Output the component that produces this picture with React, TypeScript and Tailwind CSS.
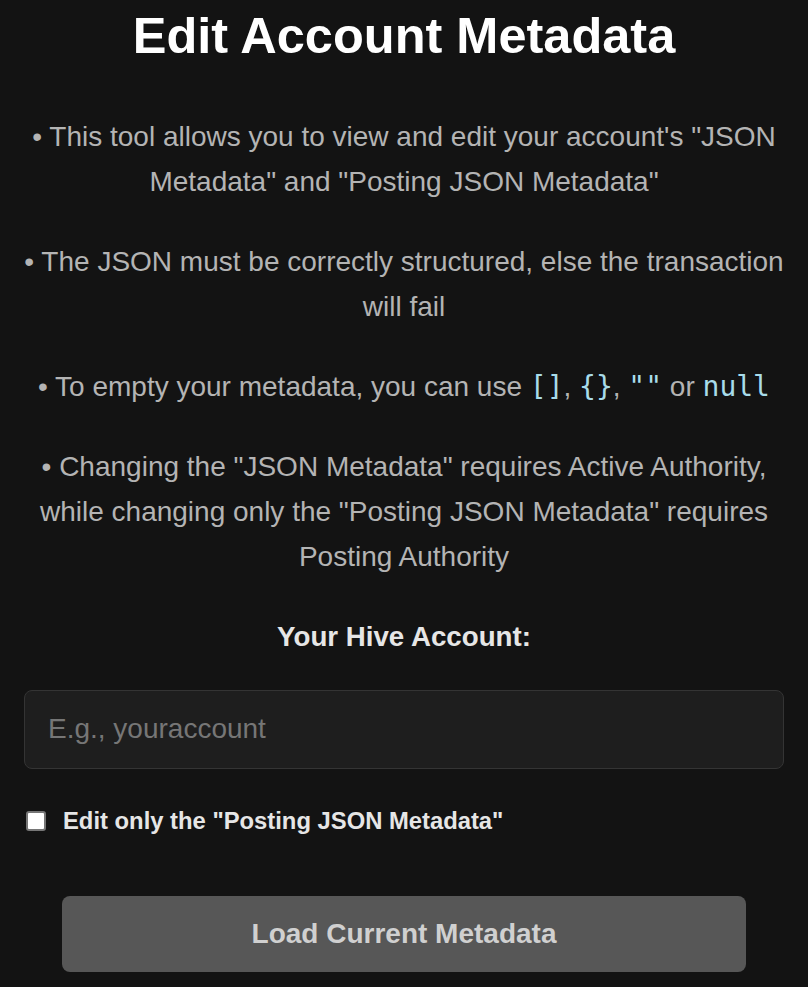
import React, { useState } from "react";

const Code = ({ children }: { children: React.ReactNode }) => (
  <code className="font-['DejaVu_Sans_Mono',monospace] text-[28px] text-[#a8dcea]">
    {children}
  </code>
);

const Note = ({ children }: { children: React.ReactNode }) => (
  <p className="mt-[35.3px] text-center text-[28px] leading-[44.8px] text-[#b4b4b4]">
    {children}
  </p>
);

const App = () => {
  const [account, setAccount] = useState("");
  const [postingOnly, setPostingOnly] = useState(false);

  return (
    <div className="min-h-[987px] bg-[#131313] font-['Liberation_Sans',Arial,sans-serif]">
      <div className="flex flex-col px-[24px] pt-[6px]">
        {/* Title */}
        <h1 className="text-center text-[50.5px] font-bold leading-[60px] text-white">
          Edit Account Metadata
        </h1>

        {/* Notes */}
        <div className="mt-[14px]">
          <Note>
            • This tool allows you to view and edit your account's "JSON
            Metadata" and "Posting JSON Metadata"
          </Note>
          <Note>
            • The JSON must be correctly structured, else the transaction will
            fail
          </Note>
          <Note>
            • To empty your metadata, you can use <Code>[]</Code>,{" "}
            <Code>{"{}"}</Code>, <Code>""</Code> or <Code>null</Code>
          </Note>
          <Note>
            • Changing the "JSON Metadata" requires Active Authority, while
            changing only the "Posting JSON Metadata" requires Posting Authority
          </Note>
        </div>

        {/* Account field */}
        <label
          htmlFor="account"
          className="mt-[40px] text-center text-[27.7px] font-bold leading-[33px] text-[#e6e6e6]"
        >
          Your Hive Account:
        </label>
        <input
          id="account"
          value={account}
          onChange={(e) => setAccount(e.target.value)}
          placeholder="E.g., youraccount"
          className="mt-[37px] h-[79px] w-full rounded-[8px] border border-[#343434] bg-[#1e1e1e] px-[23px] text-[28px] text-[#e6e6e6] outline-none placeholder:text-[#767676]"
        />

        {/* Posting only */}
        <label className="mt-[37px] flex items-center gap-[17px]">
          <input
            type="checkbox"
            checked={postingOnly}
            onChange={(e) => setPostingOnly(e.target.checked)}
            className="ml-[2px] h-[20px] w-[20px] appearance-none rounded-[3px] border-2 border-[#767676] bg-white checked:bg-[#0a66d8]"
          />
          <span className="text-[23.8px] font-bold leading-[30px] text-[#e6e6e6]">
            Edit only the "Posting JSON Metadata"
          </span>
        </label>

        {/* Load button */}
        <button className="mx-auto mt-[60px] h-[76px] w-[90%] rounded-[8px] bg-[#575757] text-[28px] font-bold text-[#d0d0d0]">
          Load Current Metadata
        </button>
      </div>
    </div>
  );
};

export default App;
